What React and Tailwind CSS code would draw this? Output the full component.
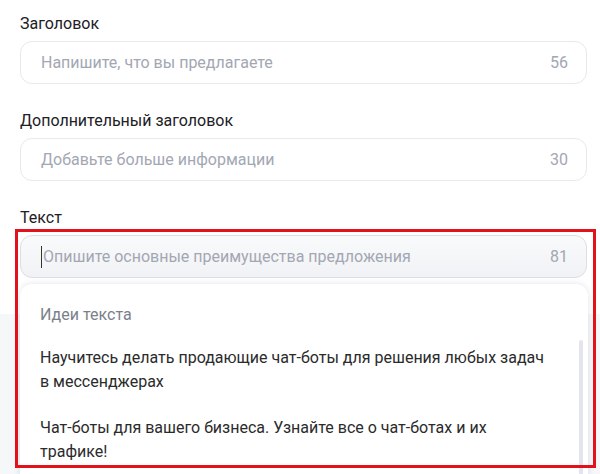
import React from "react";

const fields = [
  { label: "Заголовок", placeholder: "Напишите, что вы предлагаете", count: 56 },
  { label: "Дополнительный заголовок", placeholder: "Добавьте больше информации", count: 30 },
];

const ideas = [
  "Научитесь делать продающие чат-боты для решения любых задач в мессенджерах",
  "Чат-боты для вашего бизнеса. Узнайте все о чат-ботах и их трафике!",
];

export default function App() {
  return (
    <div className="relative w-[600px] h-[474px] overflow-hidden bg-white font-['Roboto',sans-serif] text-[16px] flex flex-col">
      <div className="px-[20px] pt-[12px]">
        {fields.map((f) => (
          <div key={f.label} className="mb-[25px]">
            <div className="leading-[24px] text-[#21201f] mb-[5px]">{f.label}</div>
            <div className="h-[43px] w-[567px] rounded-[12px] border border-[#e8e9ee] flex items-center justify-between pl-[20px] pr-[18px] text-[#a3a7b3]">
              <span>{f.placeholder}</span>
              <span>{f.count}</span>
            </div>
          </div>
        ))}
        <div>
          <div className="leading-[24px] text-[#21201f] mb-[5px]">Текст</div>
          <div className="h-[43px] w-[567px] rounded-[12px] border border-[#dcdee4] bg-gradient-to-b from-[#f9fafb] to-[#f1f2f5] flex items-center justify-between pl-[20px] pr-[18px] text-[#a3a7b3]">
            <span className="flex items-center">
              <span className="w-px h-[22px] bg-[#333] mr-px" />
              Опишите основные преимущества предложения
            </span>
            <span>81</span>
          </div>
        </div>
      </div>

      <div className="flex-1 mt-[36px] bg-[#f6f7f9]" />

      {/* suggestions popup */}
      <div className="absolute left-[20px] top-[284px] w-[568px] h-[220px] bg-white rounded-t-[12px] shadow-[0_0_6px_rgba(20,30,60,0.12)]">
        <div className="pl-[20px] pr-[40px] pt-[19px]">
          <div className="leading-[24px] text-[#7b7f8a] mb-[19px]">Идеи текста</div>
          {ideas.map((t) => (
            <div key={t} className="leading-[24px] text-[#2b2b2b] mb-[22px]">{t}</div>
          ))}
        </div>
        <div className="absolute right-[5px] top-[56px] w-[4px] h-[200px] rounded-full bg-[#e3e5ec]" />
      </div>

      {/* annotation */}
      <div className="absolute left-[15px] top-[229px] w-[581px] h-[239px] border-[3px] border-[#e3121a] pointer-events-none" />
    </div>
  );
}
